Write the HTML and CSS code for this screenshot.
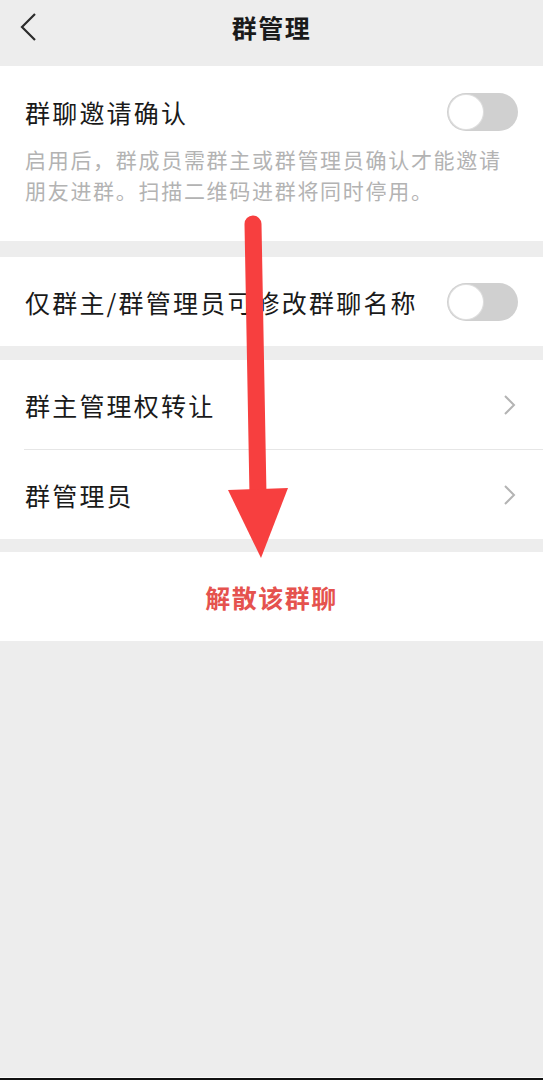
FILE: index.html
```html
<!DOCTYPE html>
<html lang="zh-CN">
<head>
<meta charset="utf-8">
<title>群管理</title>
<link rel="stylesheet" href="styles.css">
</head>
<body>
<div class="page">
  <header class="nav">
    <svg class="back" width="20" height="32" viewBox="0 0 20 32"><polyline points="15,3 2,16 15,29" fill="none" stroke="#2b2b2b" stroke-width="2.2"/></svg>
    <h1 class="nav-title">群管理</h1>
  </header>

  <section class="group sec-invite">
    <div class="row-top">
      <span class="label">群聊邀请确认</span>
      <span class="switch"><span class="knob"></span></span>
    </div>
    <p class="desc">启用后，群成员需群主或群管理员确认才能邀请<br>朋友进群。扫描二维码进群将同时停用。</p>
  </section>

  <section class="group sec-name">
    <div class="row">
      <span class="label">仅群主/群管理员可修改群聊名称</span>
      <span class="switch"><span class="knob"></span></span>
    </div>
  </section>

  <section class="group">
    <div class="row">
      <span class="label">群主管理权转让</span>
      <svg class="chev" width="14" height="22" viewBox="0 0 14 22"><polyline points="3,2 12,11 3,20" fill="none" stroke="#b4b4b4" stroke-width="2"/></svg>
    </div>
    <div class="divider"></div>
    <div class="row">
      <span class="label">群管理员</span>
      <svg class="chev" width="14" height="22" viewBox="0 0 14 22"><polyline points="3,2 12,11 3,20" fill="none" stroke="#b4b4b4" stroke-width="2"/></svg>
    </div>
  </section>

  <section class="group">
    <div class="row row-center">
      <span class="danger">解散该群聊</span>
    </div>
  </section>

  <div class="spacer"></div>
  <div class="bottom-line"></div>

  <svg class="arrow" width="543" height="600" viewBox="0 0 543 600">
    <line x1="253" y1="224" x2="258" y2="495" stroke="#f73f3f" stroke-width="17" stroke-linecap="round"/>
    <polygon points="228,490 288,488 261,558" fill="#f73f3f"/>
  </svg>
</div>
</body>
</html>
```

FILE: styles.css
```css
* { box-sizing: border-box; margin: 0; padding: 0; }
html, body { background: #ededed; }
body {
  font-family: "Noto Sans CJK SC", "Noto Sans", sans-serif;
  color: #1a1a1a;
}
.page {
  position: relative;
  width: 543px;
  min-height: 1080px;
  display: flex;
  flex-direction: column;
}
.nav {
  height: 66px;
  display: flex;
  align-items: center;
  justify-content: center;
  position: relative;
}
.back {
  position: absolute;
  left: 20px;
  top: 11px;
}
.nav-title {
  font-size: 25px;
  font-weight: 700;
  letter-spacing: 1.5px;
  color: #1a1a1a;
  line-height: 1;
  margin-top: -12px;
}
.group {
  background: #fff;
  margin-bottom: 13px;
}
.sec-invite {
  padding: 24px 25px 35px 25px;
  margin-bottom: 16px;
}
.sec-name { margin-bottom: 14px; }
.row-top {
  height: 44px;
  display: flex;
  align-items: center;
  justify-content: space-between;
}
.label {
  font-size: 25px;
  letter-spacing: 2.2px;
  color: #1a1a1a;
}
.desc {
  margin-top: 10px;
  font-size: 21px;
  line-height: 31px;
  letter-spacing: 1.7px;
  color: #b3b3b3;
}
.switch {
  width: 71px;
  height: 38px;
  border-radius: 19px;
  background: #d0d0d0;
  position: relative;
  flex: none;
}
.knob {
  position: absolute;
  left: 2px;
  top: 2px;
  width: 34px;
  height: 34px;
  border-radius: 50%;
  background: #fff;
  box-shadow: 0 0 0 1px #dedede;
}
.row {
  height: 89px;
  padding: 0 25px;
  display: flex;
  align-items: center;
  justify-content: space-between;
}
.row .chev { margin-right: 2px; }
.divider {
  height: 1px;
  background: #e6e6e6;
  margin-left: 24px;
}
.row-center { justify-content: center; }
.danger {
  font-size: 25px;
  font-weight: 700;
  letter-spacing: 1.5px;
  color: #e5524e;
}
.spacer { flex: 1; }
.bottom-line {
  height: 3px;
  border-top: 1px solid #fafafa;
  background: #111;
}
.arrow {
  position: absolute;
  left: 0;
  top: 0;
  pointer-events: none;
}
```
